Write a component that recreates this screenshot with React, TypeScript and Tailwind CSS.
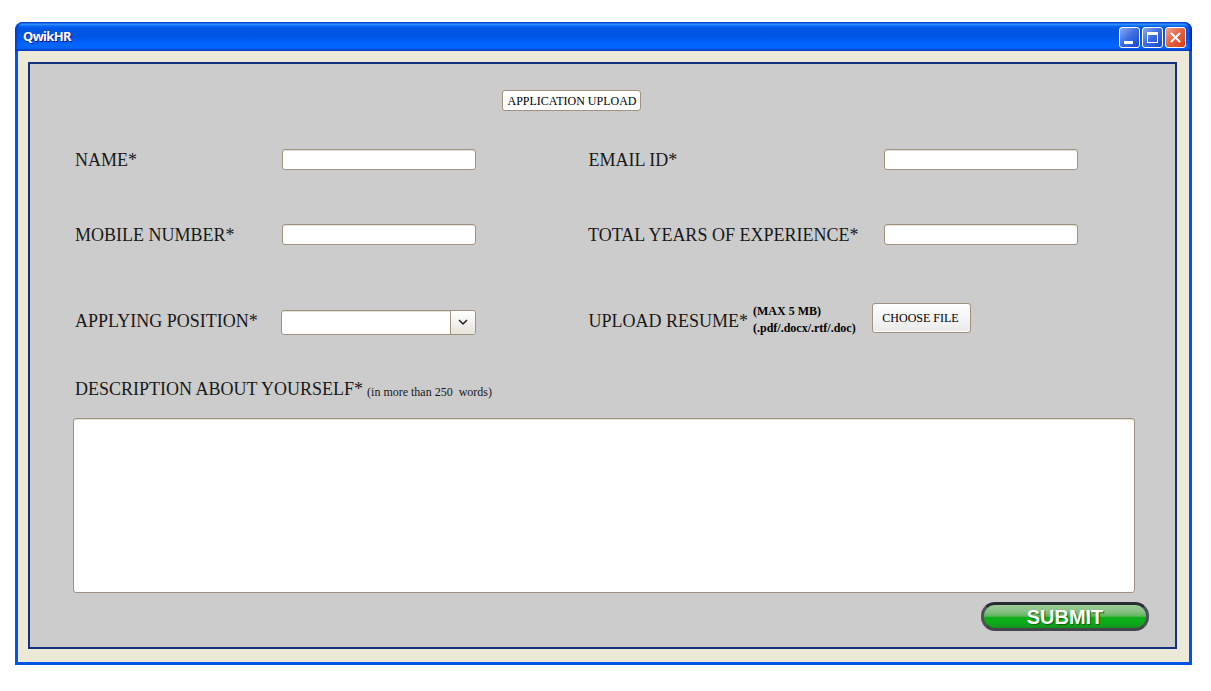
import type { ReactNode } from "react";

const inputStyle =
  "h-[21px] w-[194px] rounded-[3px] border border-[#a0927f] bg-white px-1 text-xs shadow-[inset_0_1px_0_#e4e0dc] outline-none";

function Label({ children, className = "pt-px" }: { children: ReactNode; className?: string }) {
  return <span className={`block whitespace-nowrap text-lg leading-[20px] text-[#181818] ${className}`}>{children}</span>;
}

function WindowButton({ children, className }: { children: ReactNode; className: string }) {
  return (
    <button className={`flex h-[21px] w-[21px] items-center justify-center rounded-[3px] border border-white bg-linear-to-br ${className}`}>
      <svg width="19" height="19" viewBox="0 0 19 19" fill="none" shapeRendering="crispEdges">
        {children}
      </svg>
    </button>
  );
}

function TitleBar() {
  return (
    <header className="flex h-[29px] items-start justify-between rounded-t-[8px] bg-[linear-gradient(to_bottom,#0058e6_0,#0a5ef0_3%,#3a93ff_7%,#2288ff_10%,#0468f4_14%,#0057e4_22%,#0054e3_45%,#005cf5_65%,#0066ff_78%,#0066ff_86%,#005bec_93%,#003fc8_100%)] pt-[5px] pr-[6px] pl-2 shadow-[inset_-2px_0_2px_#0026b5,inset_2px_0_2px_#0040c8]">
      <h1 className="font-['Noto_Sans'] text-[13px] leading-[19px] font-bold tracking-[-0.65px] text-white [text-shadow:1px_1px_#0f1089]">
        QwikHR
      </h1>
      <div className="flex gap-[2px]">
        <WindowButton className="from-[#8aaaf5] via-[#3c6ae0] to-[#1447d0]">
          <path d="M4 13h9v3H4z" fill="white" />
        </WindowButton>
        <WindowButton className="from-[#8aaaf5] via-[#3c6ae0] to-[#1447d0]">
          <path d="M4 4h11v11H4zM5 7v7h9V7z" fill="white" fillRule="evenodd" />
        </WindowButton>
        <WindowButton className="from-[#f0a08c] via-[#e56040] to-[#d83c08]">
          <path d="M5 5l9 9M14 5l-9 9" stroke="white" strokeWidth="2" shapeRendering="auto" />
        </WindowButton>
      </div>
    </header>
  );
}

export default function App() {
  return (
    <main className="h-[691px] w-[1211px] bg-white pt-[22px] pl-[15px] font-['Liberation_Serif',serif]">
      <div className="flex h-[643px] w-[1177px] flex-col">
        <TitleBar />
        <div className="flex-1 border-x-[3px] border-b-[3px] border-[#0054e9] bg-[#ece9d8] px-[10px] pt-[11px]">
          <form className="h-[587px] w-[1149px] border-2 border-[#16307f] bg-[#cccccc] px-[43px]">
            <div className="flex h-[85px] pt-[26px] pl-[429px]">
              <div className="h-[21px] w-[139px] rounded-[3px] border border-[#a0927f] bg-white pl-[4.5px] text-[12px] leading-[20px] whitespace-nowrap">
                APPLICATION UPLOAD
              </div>
            </div>
            <div className="grid h-[75px] grid-cols-[209px_306.5px_295.5px_194px] items-start">
              <Label className="pt-px pl-[2px]">NAME*</Label>
              <input className={inputStyle} />
              <Label>EMAIL ID*</Label>
              <input className={inputStyle} />
            </div>
            <div className="grid h-[79px] grid-cols-[209px_306px_296px_194px] items-start">
              <Label className="pt-px pl-[2px]">MOBILE NUMBER*</Label>
              <input className={inputStyle} />
              <Label>TOTAL YEARS OF EXPERIENCE*</Label>
              <input className={inputStyle} />
            </div>
            <div className="grid h-[75px] grid-cols-[208px_307.5px_164.5px_119px_99px] items-start">
              <Label className="pt-[8px] pl-[2px]">APPLYING POSITION*</Label>
              <div className="mt-[7px] flex h-[25px] w-[195px] overflow-hidden rounded-[3px] border border-[#a0927f] bg-white shadow-[inset_0_1px_0_#e4e0dc]">
                <input className="min-w-0 flex-1 bg-transparent px-1 text-xs outline-none" />
                <button type="button" className="flex w-[25px] items-center justify-center border-l border-[#a0927f] bg-linear-to-b from-white via-[#f4f2ed] to-[#e6e3da]">
                  <svg width="10" height="7" viewBox="0 0 10 7" fill="none">
                    <path d="M1 1l4 4 4-4" stroke="#222" strokeWidth="1.5" />
                  </svg>
                </button>
              </div>
              <Label className="pt-[8px]">UPLOAD RESUME*</Label>
              <div className="text-[12px] leading-[17px] font-bold whitespace-nowrap">
                (MAX 5 MB)
                <br />
                (.pdf/.docx/.rtf/.doc)
              </div>
              <button type="button" className="h-[30px] w-[99px] rounded-[3px] border border-[#a0927f] bg-linear-to-b from-white via-[#f5f5f5] via-50% to-[#eaeaea] pr-[2px] text-[12px] leading-[27px] whitespace-nowrap shadow-[inset_0_-1px_0_white]">
                CHOOSE FILE
              </button>
            </div>
            <div className="flex h-[40px] items-start gap-[4px] pt-px pl-[2px]">
              <Label className="">DESCRIPTION ABOUT YOURSELF*</Label>
              <span className="pt-[3px] text-[12px] leading-[20px] whitespace-pre text-[#181818]">(in more than 250  words)</span>
            </div>
            <textarea className="block h-[175px] w-[1062px] resize-none rounded-[3px] border border-[#a0927f] bg-white p-2 shadow-[inset_0_1px_0_#e4e0dc] outline-none" />
            <div className="mt-[9px] flex pl-[908px]">
              <button type="button" className="h-[29px] w-[168px] shrink-0 rounded-[14px] border-[3px] border-t-[#292c33] border-r-[#4d5057] border-b-[#44444b] border-l-[#4d5057] bg-[linear-gradient(to_bottom,#9ccb96_0,#86c082_30%,#5fb65d_48%,#0bad18_55%,#0bad18_75%,#159020_100%)] pt-px font-['Liberation_Sans',sans-serif] text-[20px] leading-[22px] font-bold text-white [text-shadow:1px_1px_1px_#075d0b]">
                SUBMIT
              </button>
            </div>
          </form>
        </div>
      </div>
    </main>
  );
}
